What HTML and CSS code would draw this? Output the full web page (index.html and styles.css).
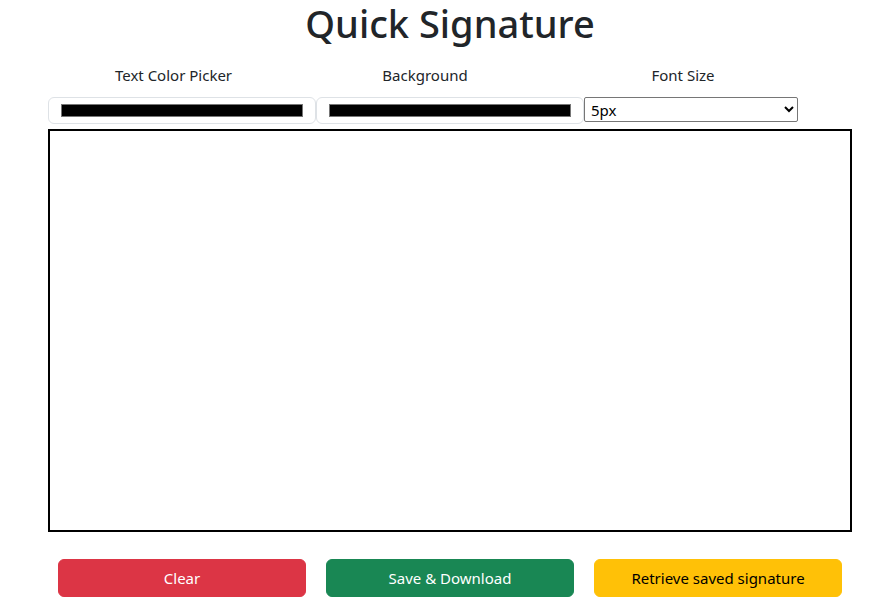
FILE: index.html
```html
<!DOCTYPE html>
<html>
<head>
<meta charset="utf-8">
<link rel="stylesheet" href="styles.css">
</head>
<body>
<main class="page">
  <h1 class="title">Quick Signature</h1>
  <div class="labels">
    <div class="label">Text Color Picker</div>
    <div class="label">Background</div>
    <div class="label">Font Size</div>
  </div>
  <div class="controls">
    <input class="color-input" type="color" value="#000000">
    <input class="color-input" type="color" value="#000000">
    <select class="size-select">
      <option>5px</option>
      <option>10px</option>
      <option>20px</option>
      <option>30px</option>
      <option>40px</option>
      <option>50px</option>
    </select>
  </div>
  <div class="canvas-wrap">
    <canvas class="pad" width="800" height="399"></canvas>
  </div>
  <div class="buttons">
    <button class="btn btn-red">Clear</button>
    <button class="btn btn-green">Save &amp; Download</button>
    <button class="btn btn-yellow">Retrieve saved signature</button>
  </div>
</main>
</body>
</html>
```
FILE: styles.css
```css
html, body {
  margin: 0;
  padding: 0;
  background: #fff;
}
body {
  font-family: "Segoe UI", "Noto Sans", "Open Sans", sans-serif;
  color: #212529;
  font-size: 16px;
  line-height: 1.5;
}
.page {
  width: 890px;
  overflow: hidden;
}
.title {
  margin: 2px 0 0 10px;
  text-align: center;
  font-size: 38px;
  font-weight: 500;
  line-height: 42px;
  letter-spacing: 0;
}
.labels {
  display: grid;
  grid-template-columns: 255px 248px 268px;
  margin: 19px 0 0 46px;
}
.label {
  text-align: center;
  font-size: 15px;
  line-height: 24px;
}
.controls {
  display: flex;
  align-items: flex-start;
  margin: 10px 0 0 48px;
}
.color-input {
  -webkit-appearance: none;
  appearance: none;
  box-sizing: border-box;
  width: 268px;
  height: 27px;
  padding: 6px 12px;
  margin: 0;
  border: 1px solid #dee2e6;
  border-radius: 6px;
  background: #fff;
  cursor: pointer;
}
.color-input::-webkit-color-swatch-wrapper {
  padding: 0;
}
.color-input::-webkit-color-swatch {
  border: 1px solid #767676;
  border-radius: 0;
}
.size-select {
  box-sizing: border-box;
  width: 214px;
  height: 25px;
  margin: 0;
  font-family: "Segoe UI", "Noto Sans", sans-serif;
  font-size: 15px;
  color: #000;
  border: 1px solid #767676;
  border-radius: 2px;
  background: #fff;
  padding: 0 2px;
}
.canvas-wrap {
  margin: 5px 0 0 48px;
  display: flex;
}
.pad {
  display: block;
  width: 800px;
  height: 399px;
  border: 2px solid #000;
  background: #fff;
}
.buttons {
  display: flex;
  gap: 20px;
  margin: 27px 0 0 58px;
}
.btn {
  box-sizing: border-box;
  width: 248px;
  height: 38px;
  border: 1px solid transparent;
  border-radius: 6px;
  font-family: "Segoe UI", "Noto Sans", sans-serif;
  font-size: 15px;
  line-height: 24px;
  padding: 6px 12px;
  cursor: pointer;
}
.btn-red {
  background: #dc3545;
  border-color: #dc3545;
  color: #fff;
}
.btn-green {
  background: #198754;
  border-color: #198754;
  color: #fff;
}
.btn-yellow {
  background: #ffc107;
  border-color: #ffc107;
  color: #000;
}
```
